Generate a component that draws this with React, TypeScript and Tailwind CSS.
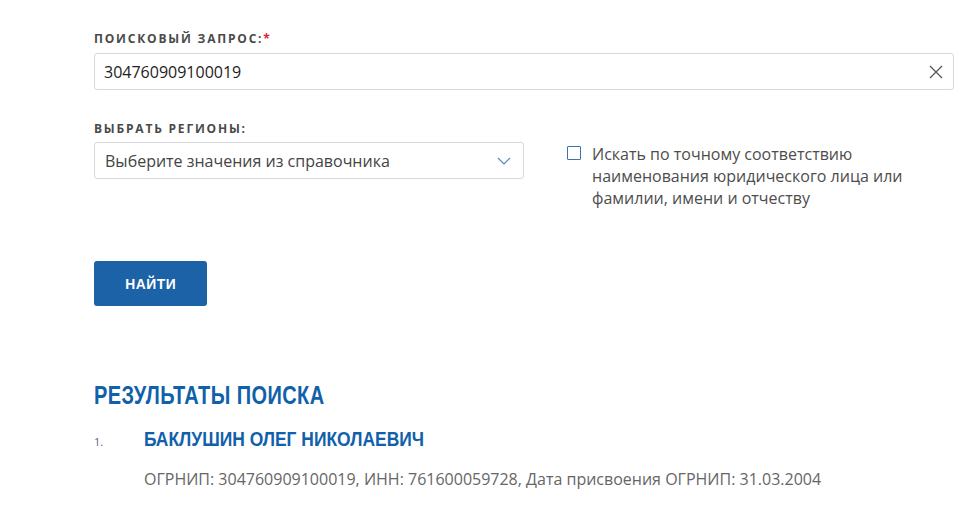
import React, { useState } from 'react';

const cond = { fontFamily: '"Liberation Sans", Arial, sans-serif' } as React.CSSProperties;

const App: React.FC = () => {
  const [query, setQuery] = useState('304760909100019');
  const [exact, setExact] = useState(false);

  return (
    <div className="w-[974px] h-[528px] bg-white overflow-hidden" style={{ fontFamily: '"Open Sans", sans-serif' }}>
      <div className="pl-[94px] pr-[20px] pt-[31px]">
        {/* Search query */}
        <label className="block text-[12px] font-bold tracking-[0.15em] text-[#4a4a4a] uppercase leading-[16px]">
          Поисковый запрос:<span className="text-[#e0202e]">*</span>
        </label>
        <div className="mt-[6px] flex items-center h-[37px] border border-[#d4d8de] rounded-[3px] pl-[9px] pr-[10px]">
          <input
            value={query}
            onChange={(e) => setQuery(e.target.value)}
            className="flex-1 outline-none text-[16px] text-[#222] bg-transparent"
          />
          <button onClick={() => setQuery('')} className="text-[#555]">
            <svg width="14" height="14" viewBox="0 0 14 14" fill="none" stroke="currentColor" strokeWidth="1.3">
              <path d="M1 1l12 12M13 1L1 13" />
            </svg>
          </button>
        </div>

        {/* Regions + checkbox */}
        <div className="mt-[31px] flex">
          <div className="w-[430px]">
            <label className="block text-[12px] font-bold tracking-[0.15em] text-[#4a4a4a] uppercase leading-[16px]">
              Выбрать регионы:
            </label>
            <div className="mt-[5px] flex items-center justify-between h-[37px] border border-[#d4d8de] rounded-[3px] pl-[10px] pr-[12px]">
              <span className="text-[16px] text-[#444]">Выберите значения из справочника</span>
              <svg width="14" height="8" viewBox="0 0 14 8" fill="none" stroke="#5a86b8" strokeWidth="1.2">
                <path d="M1 1l6 6 6-6" />
              </svg>
            </div>
          </div>
          <label className="ml-[43px] mt-[22px] flex items-start gap-[11px] cursor-pointer">
            <span
              onClick={() => setExact(!exact)}
              className={`mt-[3px] w-[14px] h-[14px] border border-[#3a72b0] rounded-[1px] flex-shrink-0 ${exact ? 'bg-[#1b63a6]' : 'bg-white'}`}
            ></span>
            <span className="text-[16px] leading-[22px] text-[#4d4d4d] w-[330px]">
              Искать по точному соответствию наименования юридического лица или фамилии, имени и отчеству
            </span>
          </label>
        </div>

        {/* Button */}
        <button className="mt-[52px] w-[113px] h-[45px] rounded-[3px] bg-[#1b63a6] text-white text-[15px] font-bold tracking-[0.04em]">
          <span className="inline-block scale-x-[0.92]" style={cond}>НАЙТИ</span>
        </button>

        {/* Results */}
        <h2
          className="mt-[74px] text-[25px] leading-[30px] font-bold text-[#1160aa] tracking-[0.02em] origin-left scale-x-[0.8] whitespace-nowrap"
          style={cond}
        >
          РЕЗУЛЬТАТЫ ПОИСКА
        </h2>
        <div className="mt-[16px] flex items-baseline">
          <span className="w-[50px] text-[11px] text-[#6b5a7a]">1.</span>
          <div>
            <div
              className="text-[21px] leading-[26px] font-bold text-[#1160aa] origin-left scale-x-[0.83] whitespace-nowrap"
              style={cond}
            >
              БАКЛУШИН ОЛЕГ НИКОЛАЕВИЧ
            </div>
            <div className="mt-[15px] text-[16px] text-[#666]">
              ОГРНИП: 304760909100019, ИНН: 761600059728, Дата присвоения ОГРНИП: 31.03.2004
            </div>
          </div>
        </div>
      </div>
    </div>
  );
};

export default App;
